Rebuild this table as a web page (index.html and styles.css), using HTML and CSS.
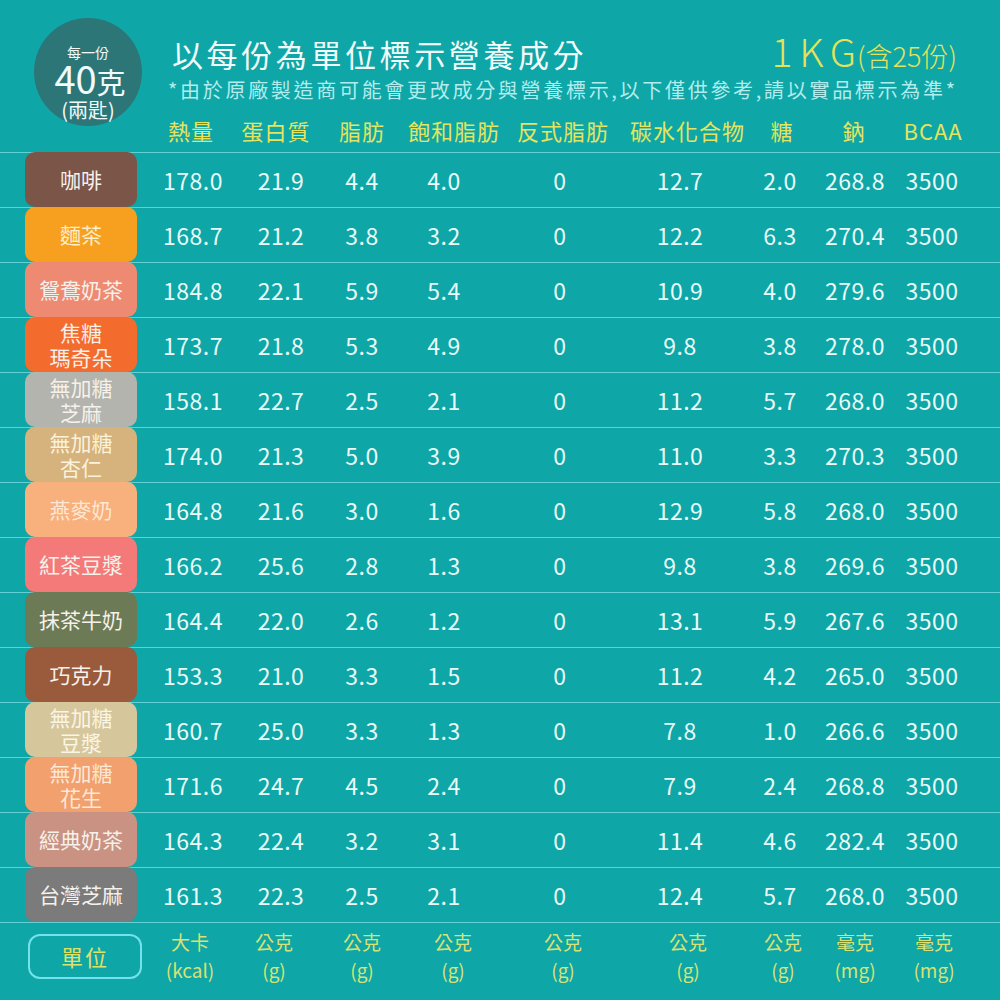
FILE: index.html
```html
<!DOCTYPE html>
<html lang="zh-Hant">
<head>
<meta charset="utf-8">
<title>營養成分</title>
<link rel="stylesheet" href="styles.css">
</head>
<body>
<div class="page">
  <header class="top">
    <div class="badge">
      <div class="b-small">每一份</div>
      <div class="b-big">40<span>克</span></div>
      <div class="b-sub">(兩匙)</div>
    </div>
    <div class="titles">
      <div class="title-row">
        <h1 class="title">以每份為單位標示營養成分</h1>
        <div class="kg">1KG<span>(含25份)</span></div>
      </div>
      <p class="note">*由於原廠製造商可能會更改成分與營養標示,以下僅供參考,請以實品標示為準*</p>
      <div class="head-grid">
        <div>熱量</div><div>蛋白質</div><div>脂肪</div><div>飽和脂肪</div><div>反式脂肪</div><div>碳水化合物</div><div>糖</div><div>鈉</div><div>BCAA</div>
      </div>
    </div>
  </header>

  <div class="rows">
    <div class="row"><div class="label c-coffee">咖啡</div><div>178.0</div><div>21.9</div><div>4.4</div><div>4.0</div><div>0</div><div>12.7</div><div>2.0</div><div>268.8</div><div>3500</div></div>
    <div class="row"><div class="label c-mian">麵茶</div><div>168.7</div><div>21.2</div><div>3.8</div><div>3.2</div><div>0</div><div>12.2</div><div>6.3</div><div>270.4</div><div>3500</div></div>
    <div class="row"><div class="label c-yuan">鴛鴦奶茶</div><div>184.8</div><div>22.1</div><div>5.9</div><div>5.4</div><div>0</div><div>10.9</div><div>4.0</div><div>279.6</div><div>3500</div></div>
    <div class="row"><div class="label c-caramel">焦糖<br>瑪奇朵</div><div>173.7</div><div>21.8</div><div>5.3</div><div>4.9</div><div>0</div><div>9.8</div><div>3.8</div><div>278.0</div><div>3500</div></div>
    <div class="row"><div class="label c-sesame">無加糖<br>芝麻</div><div>158.1</div><div>22.7</div><div>2.5</div><div>2.1</div><div>0</div><div>11.2</div><div>5.7</div><div>268.0</div><div>3500</div></div>
    <div class="row"><div class="label c-almond">無加糖<br>杏仁</div><div>174.0</div><div>21.3</div><div>5.0</div><div>3.9</div><div>0</div><div>11.0</div><div>3.3</div><div>270.3</div><div>3500</div></div>
    <div class="row"><div class="label c-oat">燕麥奶</div><div>164.8</div><div>21.6</div><div>3.0</div><div>1.6</div><div>0</div><div>12.9</div><div>5.8</div><div>268.0</div><div>3500</div></div>
    <div class="row"><div class="label c-blacktea">紅茶豆漿</div><div>166.2</div><div>25.6</div><div>2.8</div><div>1.3</div><div>0</div><div>9.8</div><div>3.8</div><div>269.6</div><div>3500</div></div>
    <div class="row"><div class="label c-matcha">抹茶牛奶</div><div>164.4</div><div>22.0</div><div>2.6</div><div>1.2</div><div>0</div><div>13.1</div><div>5.9</div><div>267.6</div><div>3500</div></div>
    <div class="row"><div class="label c-choco">巧克力</div><div>153.3</div><div>21.0</div><div>3.3</div><div>1.5</div><div>0</div><div>11.2</div><div>4.2</div><div>265.0</div><div>3500</div></div>
    <div class="row"><div class="label c-soy">無加糖<br>豆漿</div><div>160.7</div><div>25.0</div><div>3.3</div><div>1.3</div><div>0</div><div>7.8</div><div>1.0</div><div>266.6</div><div>3500</div></div>
    <div class="row"><div class="label c-peanut">無加糖<br>花生</div><div>171.6</div><div>24.7</div><div>4.5</div><div>2.4</div><div>0</div><div>7.9</div><div>2.4</div><div>268.8</div><div>3500</div></div>
    <div class="row"><div class="label c-classic">經典奶茶</div><div>164.3</div><div>22.4</div><div>3.2</div><div>3.1</div><div>0</div><div>11.4</div><div>4.6</div><div>282.4</div><div>3500</div></div>
    <div class="row"><div class="label c-taiwan">台灣芝麻</div><div>161.3</div><div>22.3</div><div>2.5</div><div>2.1</div><div>0</div><div>12.4</div><div>5.7</div><div>268.0</div><div>3500</div></div>
  </div>

  <div class="unit-row">
    <div class="unit-cell"><div class="unit-box">單位</div></div>
    <div>大卡<br>(kcal)</div>
    <div>公克<br>(g)</div>
    <div>公克<br>(g)</div>
    <div>公克<br>(g)</div>
    <div>公克<br>(g)</div>
    <div>公克<br>(g)</div>
    <div>公克<br>(g)</div>
    <div>毫克<br>(mg)</div>
    <div>毫克<br>(mg)</div>
  </div>
</div>
</body>
</html>
```

FILE: styles.css
```css
* { box-sizing: border-box; }
html, body { margin: 0; padding: 0; }
body {
  background: #0ea6a7;
  font-family: "Noto Sans CJK TC", "Noto Sans", sans-serif;
  color: #eafbf7;
}
.page {
  width: 1000px;
  height: 1000px;
  background: #0ea6a7;
  overflow: hidden;
}

/* top area */
.top {
  display: flex;
  height: 152px;
}
.badge {
  flex: none;
  width: 108px;
  height: 108px;
  margin: 18px 0 0 34px;
  padding-top: 26px;
  border-radius: 50%;
  background: #2d7678;
  color: #f2fbfb;
  display: flex;
  flex-direction: column;
  align-items: center;
  justify-content: flex-start;
}
.b-small { font-size: 14px; line-height: 16px; }
.b-big { font-size: 38px; line-height: 36px; padding-left: 4px; }
.b-big span { font-size: 29px; }
.b-sub { font-size: 20px; line-height: 22px; }

.titles {
  flex: 1;
  margin-left: 4px;
  display: flex;
  flex-direction: column;
}
.title-row {
  display: flex;
  align-items: baseline;
  margin-top: 30px;
  padding-left: 26px;
  padding-right: 43px;
  height: 40px;
}
.title {
  margin: 0;
  font-size: 31px;
  font-weight: normal;
  letter-spacing: 3.6px;
  line-height: 40px;
  color: #f2fbfb;
}
.kg {
  margin-left: auto;
  font-size: 39px;
  line-height: 40px;
  letter-spacing: 7px;
  color: #e4e25c;
  font-weight: 300;
}
.kg span {
  font-size: 27px;
  letter-spacing: 0;
  margin-left: -6px;
}
.note {
  margin: 7px 0 0 22px;
  font-size: 20px;
  line-height: 26px;
  letter-spacing: 2.7px;
  color: #b2ecec;
  white-space: nowrap;
}
.head-grid {
  display: grid;
  grid-template-columns: 90px 80px 92px 88px 134px 114px 76px 68px 90px;
  margin-top: 12px;
  font-size: 22px;
  line-height: 30px;
  letter-spacing: 1px;
  color: #e5e45c;
  text-align: center;
  white-space: nowrap;
}

/* data rows */
.rows { display: flex; flex-direction: column; }
.row {
  display: grid;
  grid-template-columns: 160px 66px 110px 52px 112px 120px 120px 80px 70px 84px;
  align-items: center;
  height: 55px;
  border-top: 1px solid #62cfd4;
  font-size: 23px;
  letter-spacing: 0.5px;
  text-align: center;
  white-space: nowrap;
}
.label {
  margin: -1px 0 0 25px;
  width: 112px;
  height: 55px;
  border-radius: 10px;
  display: flex;
  align-items: center;
  justify-content: center;
  font-size: 21px;
  line-height: 25px;
  letter-spacing: 0;
  color: #f6f1ea;
  text-align: center;
}
.c-coffee { background: #7b5548; }
.c-mian { background: #f7a020; color: #fbeec8; }
.c-yuan { background: #ef8a72; }
.c-caramel { background: #f46b2e; }
.c-sesame { background: #b4b4ae; }
.c-almond { background: #d6b27c; color: #fbf2dc; }
.c-oat { background: #f8b07c; color: #fde8d4; }
.c-blacktea { background: #f47a7a; }
.c-matcha { background: #6c7b56; }
.c-choco { background: #9a5a3c; }
.c-soy { background: #d6c69c; color: #fbf5e4; }
.c-peanut { background: #f1a06e; color: #fde8d6; }
.c-classic { background: #c99282; }
.c-taiwan { background: #7b7b7b; }

/* unit row */
.unit-row {
  display: grid;
  grid-template-columns: 146px 88px 80px 96px 86px 134px 116px 74px 70px 88px;
  border-top: 1px solid #62cfd4;
  padding-top: 5px;
  font-size: 19px;
  line-height: 28px;
  color: #d8e274;
  text-align: center;
  white-space: nowrap;
}
.unit-cell { display: flex; align-items: center; }
.unit-box {
  margin-left: 28px;
  width: 114px;
  height: 45px;
  border: 2px solid #74e2ec;
  border-radius: 12px;
  display: flex;
  align-items: center;
  justify-content: center;
  font-size: 22px;
  letter-spacing: 2px;
  color: #e0e264;
}
```
